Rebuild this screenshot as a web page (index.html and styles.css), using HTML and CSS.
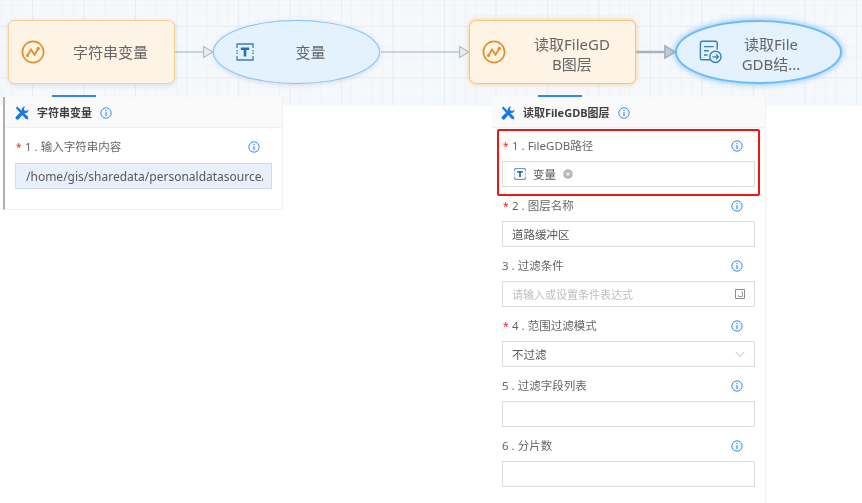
FILE: index.html
```html
<!DOCTYPE html>
<html lang="zh">
<head>
<meta charset="utf-8">
<title>FileGDB</title>
<link rel="stylesheet" href="styles.css">
</head>
<body>
<svg width="0" height="0" class="defs">
  <defs>
    <symbol id="tools" viewBox="0 0 14 14">
      <path d="M.8 2 2.200 .6 12.800 10.600 13.400 13.400 10.600 12.800Z" fill="#1677e8"/>
      <path d="M13.500 3.400A3.500 3.500 0 0 1 9 7L3.900 12.900A1.600 1.600 0 0 1 1.100 10.400L6.800 5A3.500 3.500 0 0 1 10.400.5L8.700 2.500 9.400 4.400 11.400 5.100Z" fill="#1677e8"/>
    </symbol>
    <symbol id="info" viewBox="0 0 12 12">
      <circle cx="6" cy="6" r="5.200" fill="#f4f9ff" stroke="#3f8cf0" stroke-width="1"/>
      <circle cx="6" cy="3.500" r=".7" fill="#3f8cf0"/>
      <path d="M6 5.200V9" stroke="#3f8cf0" stroke-width="1.200"/>
    </symbol>
    <symbol id="wave" viewBox="0 0 24 24">
      <circle cx="12" cy="12" r="10.600" fill="none" stroke="#e58f2a" stroke-width="1.700"/>
      <path d="M6.500 15.500 10 9.500 13.600 14.800 17.200 8.500" fill="none" stroke="#e58f2a" stroke-width="1.800"/>
      <circle cx="6.500" cy="15.500" r="1.500" fill="#e58f2a"/>
      <circle cx="17.200" cy="8.500" r="1.700" fill="#e58f2a"/>
    </symbol>
    <symbol id="textvar" viewBox="0 0 18 18">
      <path d="M1 5V1H17V5M1 13V17H17V13" fill="none" stroke="#3f7fb8" stroke-width="1.300"/>
      <path d="M1 7V11M17 7V11" stroke="#3f7fb8" stroke-width="1.300" stroke-dasharray="1.500 1"/>
      <path d="M4.800 4.600H13.200V7H10.300V13.600H7.700V7H4.800Z" fill="#2a6fab"/>
    </symbol>
  </defs>
</svg>

<section class="canvas">
  <svg class="edges" width="862" height="106" viewBox="0 0 862 106">
    <path d="M175 52H203" stroke="#bcc6d2" stroke-width="1.500"/>
    <path d="M203.500 46.500 213 52 203.500 57.500Z" fill="#e8edf2" stroke="#b6bec8" stroke-width="1.200"/>
    <path d="M381 52H459" stroke="#bcc6d2" stroke-width="1.500"/>
    <path d="M459.500 46.500 469 52 459.500 57.500Z" fill="#e8edf2" stroke="#b6bec8" stroke-width="1.200"/>
    <path d="M636 52H665" stroke="#a9b3bf" stroke-width="2.500"/>
    <path d="M665 46 675 52 665 58Z" fill="#c4ccd5" stroke="#a9b3bf" stroke-width="1.800"/>
  </svg>

  <div class="node rect n1">
    <svg class="node-icon"><use href="#wave"/></svg>
    <span class="node-text">字符串变量</span>
  </div>
  <div class="node oval n2">
    <svg class="node-icon small"><use href="#textvar"/></svg>
    <span class="node-text">变量</span>
  </div>
  <div class="node rect active n3">
    <svg class="node-icon"><use href="#wave"/></svg>
    <span class="node-text">读取FileGD<br>B图层</span>
  </div>
  <div class="node oval active n4">
    <svg class="node-icon" viewBox="0 0 20 20">
      <path d="M13 16.500H3.500A1.500 1.500 0 0 1 2 15V2.500A1.500 1.500 0 0 1 3.500 1H14.500A1.500 1.500 0 0 1 16 2.500V8" fill="none" stroke="#3f7fb8" stroke-width="1.200"/>
      <path d="M5 5.500H13M5 9H9M5 12.500H8" stroke="#3f7fb8" stroke-width="1.200"/>
      <circle cx="14.500" cy="14" r="4.700" fill="#e3f2fd" stroke="#3f7fb8" stroke-width="1.200"/>
      <path d="M12 14H17M15 12 17 14 15 16" fill="none" stroke="#3f7fb8" stroke-width="1.100"/>
    </svg>
    <span class="node-text">读取File<br>GDB结...</span>
  </div>
</section>

<main class="panels">
  <section class="panel left-panel">
    <span class="strip"></span>
    <header class="panel-head">
      <svg class="tools"><use href="#tools"/></svg>
      <h2>字符串变量</h2>
      <svg class="info head-info"><use href="#info"/></svg>
    </header>
    <div class="panel-body">
      <div class="field">
        <div class="label"><span class="req">*</span><span>1 . 输入字符串内容</span><svg class="info"><use href="#info"/></svg></div>
        <div class="input filled"><span class="clip">/home/gis/sharedata/personaldatasource/dataset</span></div>
      </div>
    </div>
  </section>

  <section class="panel right-panel">
    <span class="strip"></span>
    <header class="panel-head">
      <svg class="tools"><use href="#tools"/></svg>
      <h2>读取FileGDB图层</h2>
      <svg class="info head-info"><use href="#info"/></svg>
    </header>
    <div class="panel-body">
      <div class="field highlighted">
        <div class="label"><span class="req">*</span><span>1 . FileGDB路径</span><svg class="info"><use href="#info"/></svg></div>
        <div class="input tag-input">
          <svg class="tag-icon"><use href="#textvar"/></svg>
          <span>变量</span>
          <svg class="tag-close" viewBox="0 0 10 10"><circle cx="5" cy="5" r="4.800" fill="#b4b8bd"/><path d="M3.300 3.300 6.700 6.700M6.700 3.300 3.300 6.700" stroke="#fff" stroke-width="1"/></svg>
        </div>
      </div>
      <div class="field">
        <div class="label"><span class="req">*</span><span>2 . 图层名称</span><svg class="info"><use href="#info"/></svg></div>
        <div class="input">道路缓冲区</div>
      </div>
      <div class="field">
        <div class="label"><span>3 . 过滤条件</span><svg class="info"><use href="#info"/></svg></div>
        <div class="input placeholder"><span>请输入或设置条件表达式</span>
          <svg class="end-icon" viewBox="0 0 10 10"><path d="M.5.500H9.500V9.500H.5Z" fill="none" stroke="#8c8c8c"/><path d="M6 3H7.500V7.500H3.500V6" fill="none" stroke="#9c9c9c"/></svg>
        </div>
      </div>
      <div class="field">
        <div class="label"><span class="req">*</span><span>4 . 范围过滤模式</span><svg class="info"><use href="#info"/></svg></div>
        <div class="input"><span>不过滤</span>
          <svg class="end-icon" viewBox="0 0 10 10"><path d="M.5 2.800 5 7.500 9.500 2.800" fill="none" stroke="#bdbdbd"/></svg>
        </div>
      </div>
      <div class="field">
        <div class="label"><span>5 . 过滤字段列表</span><svg class="info"><use href="#info"/></svg></div>
        <div class="input"></div>
      </div>
      <div class="field">
        <div class="label"><span>6 . 分片数</span><svg class="info"><use href="#info"/></svg></div>
        <div class="input"></div>
      </div>
    </div>
  </section>
</main>
</body>
</html>
```

FILE: styles.css
```css
* { box-sizing: border-box; }
html, body { margin: 0; padding: 0; }
body {
  width: 862px;
  height: 503px;
  overflow: hidden;
  background: #fff;
  font-family: "Noto Sans", "Noto Sans CJK SC", sans-serif;
  color: #595959;
}
.defs { position: absolute; }

.canvas {
  position: relative;
  height: 106px;
  filter: blur(.35px);
  background-color: #f6f9fc;
  background-image:
    linear-gradient(#e9eef3 1px, transparent 1px),
    linear-gradient(90deg, #e9eef3 1px, transparent 1px),
    linear-gradient(#f0f4f8 1px, transparent 1px),
    linear-gradient(90deg, #f0f4f8 1px, transparent 1px);
  background-size: 51.5px 51.500px, 51.500px 51.500px, 10.300px 10.300px, 10.300px 10.300px;
  background-position: 0 26px, 32px 0, 0 5px, 1px 0;
}
.edges { position: absolute; left: 0; top: 0; }

.node {
  position: absolute;
  top: 20px;
  width: 167px;
  height: 64px;
  display: flex;
  align-items: center;
  font-size: 15px;
  line-height: 20px;
  color: #666;
  box-shadow: 0 1px 5px rgba(90, 100, 120, .22);
}
.rect {
  background: #fdf4e6;
  border: 1.500px solid #fbcf92;
  border-radius: 7px;
}
.oval {
  background: #e3f2fd;
  border: 1.500px solid #80c3fa;
  border-radius: 50%;
}
.rect.active { border-color: #f8c57e; box-shadow: 0 0 5px rgba(245, 170, 70, .65); }
.oval.active { border: 2px solid #6dbcfa; box-shadow: 0 0 6px rgba(60, 160, 245, .7); }
.n1 { left: 8px; }
.n2 { left: 213px; }
.n3 { left: 469px; }
.n4 { left: 675px; }

.node-icon { flex: none; width: 24px; height: 24px; margin-left: 12px; }
.node-icon.small { width: 18px; height: 18px; margin-left: 22px; }
.n4 .node-icon { margin-left: 21px; }
.node-text { flex: 1; text-align: center; }
.n1 .node-text { padding-left: 2px; }
.n2 .node-text { padding-right: 12px; }
.n3 .node-text { padding-left: 3px; padding-top: 5px; line-height: 19.500px; }
.n4 .node-text { padding-right: 20px; padding-top: 5px; line-height: 19.500px; }

.panels {
  position: relative;
  margin-top: -9px;
  display: flex;
  align-items: flex-start;
  padding-left: 3px;
  filter: blur(.35px);
}
.panel {
  position: relative;
  background: #fff;
  border: 1px solid #eef0f2;
  border-top: 0;
}
.strip {
  position: absolute;
  top: -2px;
  height: 2px;
  width: 44px;
  background: #2f86f0;
}
.left-panel {
  width: 280px;
  height: 113px;
  border-left: 2px solid #b0b0b0;
  margin-right: 209px;
}
.left-panel .strip { left: 47px; }
.right-panel { width: 274px; height: 410px; border-left: 0; border-bottom: 0; }
.right-panel .strip { left: 46px; }

.panel-head {
  height: 31px;
  padding: 1px 0 0 10px;
  display: flex;
  align-items: center;
  background: #fafafa;
  border-bottom: 1px solid #f0f0f0;
}
.right-panel .panel-head { padding-left: 9px; }
.tools { width: 14px; height: 14px; flex: none; }
.panel-head h2 {
  margin: 0 0 0 8px;
  font-size: 11px;
  line-height: 16px;
  font-weight: 700;
  color: #404040;
}
.head-info { margin-left: 8px; }
.info { width: 12px; height: 12px; flex: none; display: block; }

.panel-body { padding: 0 10px; }
.field { height: 60px; padding-top: 10px; position: relative; }
.left-panel .field { padding-top: 11px; }
.label {
  height: 16px;
  display: flex;
  align-items: center;
  font-size: 11.500px;
  line-height: 16px;
  color: #666;
}
.label .info { margin-left: auto; margin-right: 12px; }
.req { color: #f5222d; width: 9px; margin-left: 1px; font-size: 10px; }
.field > .input { margin-top: 7px; }

.input {
  height: 26px;
  display: flex;
  align-items: center;
  padding: 0 9px;
  border: 1px solid #dcdcdc;
  font-size: 11.500px;
  color: #595959;
  background: #fff;
}
.field > .input.filled {
  background: #e8f0fc;
  border-color: #d5dce6;
  padding: 0 8px 0 10px;
  font-size: 12px;
  margin-top: 8px;
}
.clip { overflow: hidden; white-space: nowrap; min-width: 0; }
.placeholder { color: #bfbfbf; font-size: 11px; }
.end-icon { margin-left: auto; width: 10px; height: 10px; flex: none; }

.highlighted::before {
  content: "";
  position: absolute;
  left: -5px;
  right: -5px;
  top: 1px;
  height: 63px;
  border: 2px solid #f01414;
  border-radius: 2px;
  pointer-events: none;
}
.tag-input { padding-left: 11px; }
.tag-icon { width: 12px; height: 12px; margin-right: 7px; }
.tag-close { width: 10px; height: 10px; margin-left: 7px; }
```
